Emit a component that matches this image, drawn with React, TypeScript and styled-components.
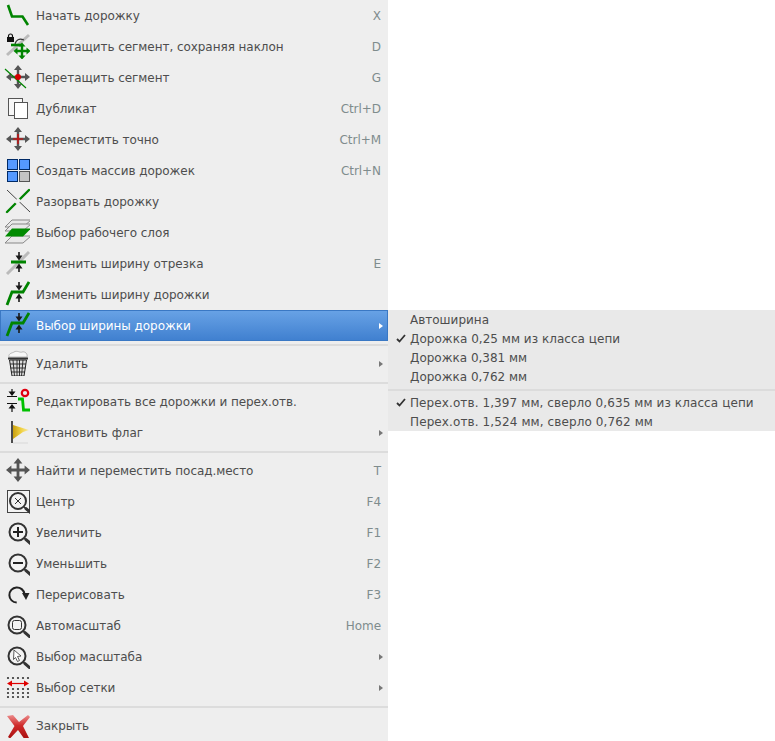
import React from "react";
import styled, { createGlobalStyle } from "styled-components";

const Global = createGlobalStyle`
  html, body { margin: 0; padding: 0; background: #fff; }
  body { font-family: "DejaVu Sans", sans-serif; font-size: 12px; color: #4d4d4d; }
`;

const Page = styled.div`
  position: relative;
  width: 775px;
  height: 741px;
  overflow: hidden;
`;

const Menu = styled.div`
  width: 388px;
  background: #eeeeee;
  letter-spacing: -0.05px;
`;

const Row = styled.div<{ $active?: boolean }>`
  display: flex;
  align-items: center;
  height: 31px;
  box-sizing: border-box;
  padding: 0 5px 0 4px;
  color: ${(p) => (p.$active ? "#fff" : "#4d4d4d")};
  ${(p) =>
    p.$active &&
    `background: linear-gradient(#69a3e6, #3f7fcf);
     box-shadow: inset 0 0 0 1px #3a78c4;`}
`;

const IconSlot = styled.svg`
  width: 26px;
  height: 26px;
  flex: none;
  margin: 0 6px 1px 0;
`;

const Label = styled.span<{ $track?: number }>`
  flex: 1;
  white-space: nowrap;
  letter-spacing: ${(p) => p.$track ?? -0.05}px;
`;

const Shortcut = styled.span`
  color: #7f8c8d;
  margin-right: 2px;
`;

const Caret = styled.i<{ $active?: boolean }>`
  width: 0;
  height: 0;
  border-left: 4px solid ${(p) => (p.$active ? "#fff" : "#777")};
  border-top: 3px solid transparent;
  border-bottom: 3px solid transparent;
`;

const Separator = styled.div`
  height: 7px;
  display: flex;
  align-items: center;
  &::after {
    content: "";
    flex: 1;
    height: 2px;
    background: #dcdcdc;
  }
`;

const SubMenu = styled.div`
  position: absolute;
  left: 388px;
  top: 310px;
  width: 387px;
  background: #e9e9e9;
`;

const SubRow = styled.div`
  display: flex;
  align-items: center;
  height: 19px;
`;

const CheckSlot = styled.span`
  width: 22px;
  flex: none;
  display: flex;
  justify-content: flex-end;
  padding-right: 4px;
  box-sizing: border-box;
`;

const G = "#008400";
const D = "#555";

const Move = ({ cx = 14, cy = 13, r = 12, c = D, w = 2.4, h = 4 }: any) => (
  <g fill={c}>
    <path d={`M${cx - r + 3} ${cy}H${cx + r - 3}M${cx} ${cy - r + 3}V${cy + r - 3}`} fill="none" stroke={c} strokeWidth={w} />
    <path d={`M${cx} ${cy - r}l${h} ${h + 1}h${-2 * h}zM${cx} ${cy + r}l${h} ${-h - 1}h${-2 * h}zM${cx - r} ${cy}l${h + 1} ${h}v${-2 * h}zM${cx + r} ${cy}l${-h - 1} ${h}v${-2 * h}z`} />
  </g>
);

const WidthArrows = ({ x = 15, y1 = 1, y2 = 23 }: any) => (
  <g fill="#1a1a1a">
    <path d={`M${x} ${y1}V${y1 + 4}M${x} ${y2}V${y2 - 4}`} stroke="#1a1a1a" strokeWidth={1.6} />
    <path d={`M${x} ${y1 + 8.5}l-3.5 -5h7zM${x} ${y2 - 8.5}l-3.5 5h7z`} />
  </g>
);

const Lens = ({ cx = 14, cy = 13, r = 8.5 }: any) => (
  <g fill="none" stroke="#333">
    <circle cx={cx} cy={cy} r={r} fill="#f3f3f3" strokeWidth={2} />
    <path d={`M${cx + 6} ${cy + 6}L${cx + 8} ${cy + 7.6}`} strokeWidth={1.6} />
    <path d={`M${cx + 8} ${cy + 7.6}L${cx + 12.6} ${cy + 11.6}`} strokeWidth={3} strokeLinecap="round" />
  </g>
);

const icons: Record<string, React.ReactNode> = {
  start: <path d="M4 3L8 14.5H18.5L24 23" fill="none" stroke={G} strokeWidth={2.6} />,
  dragSlope: (
    <>
      <path d="M3 22L25 2" stroke="#bbb" strokeWidth={3} />
      <rect x={3} y={4} width={7} height={5} fill="#111" />
      <path d="M4.5 4.5V3a2 2 0 0 1 4 0V4.5" fill="none" stroke="#111" strokeWidth={1.2} />
      <path d="M11 11C12 7 15 5 20 7" fill="none" stroke="#333" strokeWidth={1.2} />
      <path d="M7 12H18" stroke={G} strokeWidth={2.6} />
      <path d="M12 18H24M18 12V24" stroke={G} strokeWidth={2.4} />
      <path d="M18 9.5l3.5 4h-7zM18 26.5l3.5 -4h-7zM9.5 18l4 -3.5v7zM26.5 18l-4 -3.5v7z" fill={G} />
    </>
  ),
  drag: (
    <>
      <Move />
      <path d="M1 5L22 24" stroke={G} strokeWidth={1.2} />
      <circle cx={14} cy={13} r={3} fill="#d40000" />
    </>
  ),
  dup: (
    <>
      <rect x={4.5} y={3.5} width={14} height={17} fill="#f7f7f7" stroke="#555" />
      <rect x={10.5} y={7.5} width={13} height={16} fill="#fff" stroke="#555" />
    </>
  ),
  moveExact: (
    <>
      <Move />
      <path d="M9 13H19M14 8V18" stroke="#e00000" strokeWidth={1.2} />
    </>
  ),
  array: (
    <>
      <rect x={3.5} y={2.5} width={10} height={10} fill="#5599ff" stroke="#002a66" />
      <rect x={15.5} y={2.5} width={10} height={10} fill="#5599ff" stroke="#002a66" />
      <rect x={3.5} y={14.5} width={10} height={10} fill="#5599ff" stroke="#002a66" />
      <rect x={15.5} y={14.5} width={10} height={10} fill="#c4c4c4" stroke="#555" />
    </>
  ),
  breakTrack: (
    <>
      <path d="M3 2L26 24" stroke="#333" strokeWidth={0.9} />
      <path d="M3 24L25 2" stroke={G} strokeWidth={2.4} strokeLinecap="round" />
      <path d="M12 15.5L15.5 11" stroke="#eee" strokeWidth={4} />
    </>
  ),
  layers: (
    <>
      <path d="M8 1H27L19 8H1Z" fill="#e8e8e8" stroke="#888" />
      <path d="M8 5H27L19 12H1Z" fill="#e8e8e8" stroke="#888" />
      <path d="M8 17H27L19 24H1Z" fill="#e8e8e8" stroke="#888" />
      <path d="M8 9.5H27L19 17.5H1Z" fill="#008a00" />
    </>
  ),
  widthSeg: (
    <>
      <path d="M3 24L25 2" stroke="#bbb" strokeWidth={3} />
      <path d="M7 12H22" stroke={G} strokeWidth={3} />
      <WidthArrows y1={2} y2={22} />
    </>
  ),
  widthTrack: (
    <>
      <path d="M3 24L8 11H19L25 1" fill="none" stroke={G} strokeWidth={2.8} />
      <WidthArrows y1={1} y2={21} />
    </>
  ),
  trash: (
    <>
      <path d="M5 7C4 3 9 3 10 2 13 0 16 3 18 2 21 1 24 4 23 7Z" fill="#f8f8f8" stroke="#aaa" strokeWidth={0.8} />
      <path d="M4 8.5H24" stroke="#333" strokeWidth={2} />
      <path d="M5.5 10L8 26H20L22.5 10Z" fill="#ddd" stroke="#222" strokeWidth={1} />
      <path d="M9 10L10.5 26M13 10L13 26M15.5 10V26M19 10L17.5 26M6 14H22M6.5 18H21.5M7 22H21" stroke="#222" strokeWidth={0.9} fill="none" />
    </>
  ),
  editAll: (
    <>
      <path d="M8 1V4.5M8 19.5V24M3 8.5H13M3 15.5H13" stroke="#111" strokeWidth={1.2} />
      <path d="M8 8L4.5 3.5H11.5ZM8 16L4.5 20.5H11.5Z" fill="#111" />
      <path d="M14 11H18.5L19.5 22H26" fill="none" stroke="#00c000" strokeWidth={2.8} />
      <circle cx={21} cy={5} r={3.2} fill="none" stroke="#e00010" strokeWidth={2.2} />
    </>
  ),
  flag: (
    <>
      <defs>
        <linearGradient id="flagFill" x1="0" y1="0" x2="1" y2="0">
          <stop offset="0" stopColor="#c9a010" />
          <stop offset="0.5" stopColor="#f0d040" />
          <stop offset="1" stopColor="#f6eaa8" />
        </linearGradient>
      </defs>
      <path d="M8 2V24" stroke="#222" strokeWidth={1.6} />
      <path d="M9 6L25 11 19 13 9 20Z" fill="url(#flagFill)" />
      <path d="M9 24H24" stroke="#dfdfdf" strokeWidth={1.5} />
    </>
  ),
  find: <Move w={2.8} h={4.4} />,
  center: (
    <>
      <rect x={3.5} y={2.5} width={22} height={22} fill="#f4f4f4" stroke="#444" />
      <Lens r={8} />
      <path d="M11 10L17 16M17 10L11 16" stroke="#333" strokeWidth={1} />
    </>
  ),
  zoomIn: (
    <>
      <Lens />
      <path d="M9 13H19M14 8V18" stroke="#222" strokeWidth={2} />
    </>
  ),
  zoomOut: (
    <>
      <Lens />
      <path d="M9 13H19" stroke="#222" strokeWidth={2} />
    </>
  ),
  refresh: (
    <>
      <path d="M12.7 21.6A7.6 7.6 0 1 1 20.5 13" fill="none" stroke="#222" strokeWidth={2} />
      <path d="M18 12H25.5L22 19Z" fill="#222" />
    </>
  ),
  fit: (
    <>
      <Lens cx={13} />
      <rect x={8.5} y={8.5} width={9} height={9} rx={2} fill="none" stroke="#333" strokeWidth={1} />
    </>
  ),
  zoomSel: (
    <>
      <Lens cx={13} />
      <path d="M10 7L17 13 13.5 13.5 15.5 17.5 13.5 18.5 11.5 14.5 9.5 16.5Z" fill="#fff" stroke="#333" strokeWidth={0.8} />
    </>
  ),
  grid: (
    <>
      {[4, 9, 15, 19, 23].map((y) =>
        [4, 9, 14, 19, 24].map((x) =>
          y === 9 ? null : <circle key={`${x}-${y}`} cx={x} cy={y} r={1.1} fill="#333" />,
        ),
      )}
      <path d="M6 9.5H22" stroke="#e00000" strokeWidth={1.2} />
      <path d="M3 9.5L8 6.5V12.5ZM25 9.5L20 6.5V12.5Z" fill="#e00000" />
    </>
  ),
  close: (
    <>
      <defs>
        <linearGradient id="closeFill" x1="0" y1="0" x2="0" y2="1">
          <stop offset="0" stopColor="#ec8c8c" />
          <stop offset="0.45" stopColor="#cf2a2a" />
          <stop offset="1" stopColor="#a81010" />
        </linearGradient>
      </defs>
      <path d="M3 4L9 3 15 10 24 3 26 5 19 14 25 26 20 26.5 14 18 6 26.5 4 25 10.5 14Z" fill="url(#closeFill)" />
    </>
  ),
};

type Item = { icon?: string; label?: string; keys?: string; sub?: boolean; active?: boolean };

const items: Item[] = [
  { icon: "start", label: "Начать дорожку", keys: "X" },
  { icon: "dragSlope", label: "Перетащить сегмент, сохраняя наклон", keys: "D" },
  { icon: "drag", label: "Перетащить сегмент", keys: "G" },
  { icon: "dup", label: "Дубликат", keys: "Ctrl+D" },
  { icon: "moveExact", label: "Переместить точно", keys: "Ctrl+M" },
  { icon: "array", label: "Создать массив дорожек", keys: "Ctrl+N" },
  { icon: "breakTrack", label: "Разорвать дорожку" },
  { icon: "layers", label: "Выбор рабочего слоя" },
  { icon: "widthSeg", label: "Изменить ширину отрезка", keys: "E" },
  { icon: "widthTrack", label: "Изменить ширину дорожки" },
  { icon: "widthTrack", label: "Выбор ширины дорожки", sub: true, active: true },
  {},
  { icon: "trash", label: "Удалить", sub: true },
  {},
  { icon: "editAll", label: "Редактировать все дорожки и перех.отв." },
  { icon: "flag", label: "Установить флаг", sub: true },
  {},
  { icon: "find", label: "Найти и переместить посад.место", keys: "T" },
  { icon: "center", label: "Центр", keys: "F4" },
  { icon: "zoomIn", label: "Увеличить", keys: "F1" },
  { icon: "zoomOut", label: "Уменьшить", keys: "F2" },
  { icon: "refresh", label: "Перерисовать", keys: "F3" },
  { icon: "fit", label: "Автомасштаб", keys: "Home" },
  { icon: "zoomSel", label: "Выбор масштаба", sub: true },
  { icon: "grid", label: "Выбор сетки", sub: true },
  {},
  { icon: "close", label: "Закрыть" },
];

// digits come out wider in the via rows
const subItems = [
  { label: "Автоширина", track: 0 },
  { label: "Дорожка 0,25 мм из класса цепи", checked: true, track: 0.03 },
  { label: "Дорожка 0,381 мм", track: 0 },
  { label: "Дорожка 0,762 мм", track: 0 },
  {},
  { label: "Перех.отв. 1,397 мм, сверло 0,635 мм из класса цепи", checked: true, track: 0.1 },
  { label: "Перех.отв. 1,524 мм, сверло 0,762 мм", track: 0.11 },
];

export default function App() {
  return (
    <Page>
      <Global />
      <Menu>
        {items.map((item, i) =>
          item.label ? (
            <Row key={i} $active={item.active}>
              <IconSlot viewBox="0 0 26 26">{icons[item.icon!]}</IconSlot>
              <Label>{item.label}</Label>
              {item.keys && <Shortcut>{item.keys}</Shortcut>}
              {item.sub && <Caret $active={item.active} />}
            </Row>
          ) : (
            <Separator key={i} />
          ),
        )}
      </Menu>
      <SubMenu>
        {subItems.map((item, i) =>
          item.label ? (
            <SubRow key={i}>
              <CheckSlot>
                {item.checked && (
                  <svg width="10" height="9" viewBox="0 0 10 9">
                    <path d="M1 5L3.5 7.5 9 1" fill="none" stroke="#333" strokeWidth={1.8} />
                  </svg>
                )}
              </CheckSlot>
              <Label $track={item.track}>{item.label}</Label>
            </SubRow>
          ) : (
            <Separator key={i} />
          ),
        )}
      </SubMenu>
    </Page>
  );
}
